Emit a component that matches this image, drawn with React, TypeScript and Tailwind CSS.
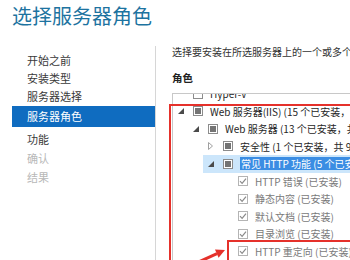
import React from "react";

type Row = {
  level: number;
  expander: "open" | "closed" | "none";
  box: "empty" | "partial" | "checked";
  text: string;
  muted?: boolean;
  selected?: boolean;
};

const rows: Row[] = [
  { level: 0, expander: "none", box: "empty", text: "Hyper-V" },
  { level: 0, expander: "open", box: "partial", text: "Web 服务器(IIS) (15 个已安装，共 43 个)" },
  { level: 1, expander: "open", box: "partial", text: "Web 服务器 (13 个已安装，共 34 个)" },
  { level: 2, expander: "closed", box: "partial", text: "安全性 (1 个已安装，共 9 个)" },
  { level: 2, expander: "open", box: "partial", text: "常见 HTTP 功能 (5 个已安装，共 6 个)", selected: true },
  { level: 3, expander: "none", box: "checked", text: "HTTP 错误 (已安装)", muted: true },
  { level: 3, expander: "none", box: "checked", text: "静态内容 (已安装)", muted: true },
  { level: 3, expander: "none", box: "checked", text: "默认文档 (已安装)", muted: true },
  { level: 3, expander: "none", box: "checked", text: "目录浏览 (已安装)", muted: true },
  { level: 3, expander: "none", box: "checked", text: "HTTP 重定向 (已安装)", muted: true },
];

const indent = ["pl-[2px]", "pl-[17px]", "pl-[32px]", "pl-[47px]"];

function Expander({ kind }: { kind: Row["expander"] }) {
  return (
    <div className="w-[18px] h-full flex items-center pl-[3px] shrink-0">
      {kind === "open" && (
        <svg width="6" height="6" viewBox="0 0 6 6">
          <polygon points="6,0 6,6 0,6" fill="#4a4a4a" />
        </svg>
      )}
      {kind === "closed" && (
        <svg width="6" height="8" viewBox="0 0 6 8">
          <polygon points="0.5,0.5 4.5,4 0.5,7.5" fill="none" stroke="#a0a0a0" strokeWidth="1" />
        </svg>
      )}
    </div>
  );
}

function Box({ kind }: { kind: Row["box"] }) {
  if (kind === "checked") {
    return (
      <div className="size-[10px] border border-[#b4b4b4] bg-white flex items-center justify-center shrink-0">
        <svg width="8" height="8" viewBox="0 0 8 8">
          <path d="M1 4.2 L3.1 6.3 L7 1.6" fill="none" stroke="#8a8a8a" strokeWidth="1.2" />
        </svg>
      </div>
    );
  }
  return (
    <div className="size-[10px] border border-[#8c8c8c] bg-white flex items-center justify-center shrink-0">
      {kind === "partial" && <div className="size-[6px] bg-[#747474]" />}
    </div>
  );
}

function TreeRow({ row }: { row: Row }) {
  const inner = (
    <>
      <Expander kind={row.expander} />
      <Box kind={row.box} />
      <span
        className={
          row.selected
            ? "ml-[7px] px-[1px] bg-[#3b8de3] text-white leading-[13px]"
            : row.muted
            ? "ml-[7px] text-[#7a7a7a]"
            : "ml-[7px] text-[#262626]"
        }
      >
        {row.text}
      </span>
    </>
  );
  if (row.selected) {
    return (
      <div className="h-[17.5px] pl-[30px] flex">
        <div className="flex-1 flex items-center pl-[2px] bg-[#cce6fb] whitespace-nowrap">{inner}</div>
      </div>
    );
  }
  return (
    <div className={`h-[17.5px] flex items-center whitespace-nowrap ${indent[row.level]}`}>{inner}</div>
  );
}

const navItems = [
  { label: "开始之前", cls: "h-[18px] leading-[18px] text-[#3a3a3a]" },
  { label: "安装类型", cls: "h-[18px] leading-[18px] text-[#3a3a3a]" },
  { label: "服务器选择", cls: "h-[19px] leading-[19px] text-[#3a3a3a]" },
  { label: "服务器角色", cls: "h-[21px] leading-[21px] bg-[#0f6cc0] text-white" },
  { label: "功能", cls: "mt-[2px] h-[20px] leading-[20px] text-[#3a3a3a]" },
  { label: "确认", cls: "h-[19px] leading-[19px] text-[#b8b8b8]" },
  { label: "结果", cls: "h-[19px] leading-[19px] text-[#b8b8b8]" },
];

export default function App() {
  return (
    <div className="relative w-[350px] h-[260px] overflow-hidden bg-white font-['Noto_Sans_CJK_SC','Noto_Sans',sans-serif]">
      {/* Title */}
      <div className="h-[46px] pl-3 pt-[2px]">
        <h1 className="text-[20px] leading-[28px] text-[#1d73a0]">选择服务器角色</h1>
      </div>

      <div className="flex h-[214px]">
        {/* Left navigation */}
        <div className="w-[156px] shrink-0 border-r border-[#d6d6d6] pt-[5px] pl-3">
          {navItems.map((item) => (
            <div key={item.label} className={`pl-[15px] text-[11px] ${item.cls}`}>
              {item.label}
            </div>
          ))}
        </div>

        {/* Right content */}
        <div className="flex-1 pl-4">
          <p className="text-[10px] leading-[12px] text-[#333] whitespace-nowrap">
            选择要安装在所选服务器上的一个或多个角色和角色服务。
          </p>
          <p className="mt-[14px] text-[10.5px] leading-[12px] font-bold text-[#222]">角色</p>
          <div className="mt-[9px] w-[400px] h-[200px] border border-[#c8c8c8] overflow-hidden text-[10px]">
            <div className="mt-[-9px]">
              {rows.map((r) => (
                <TreeRow key={r.text} row={r} />
              ))}
            </div>
          </div>
        </div>
      </div>

      {/* Red annotations */}
      <div className="absolute left-[169px] top-[104px] w-[300px] h-[300px] border-2 border-[#e5312b] pointer-events-none" />
      <div className="absolute left-[227px] top-[240px] w-[200px] h-[100px] border-2 border-[#e5312b] pointer-events-none" />
      <svg className="absolute left-0 top-0 pointer-events-none" width="350" height="260" viewBox="0 0 350 260">
        <line x1="194" y1="264" x2="217" y2="253.7" stroke="#e5312b" strokeWidth="3" />
        <polygon points="225,250 218.6,257.8 215,249.6" fill="#e5312b" />
      </svg>
    </div>
  );
}
